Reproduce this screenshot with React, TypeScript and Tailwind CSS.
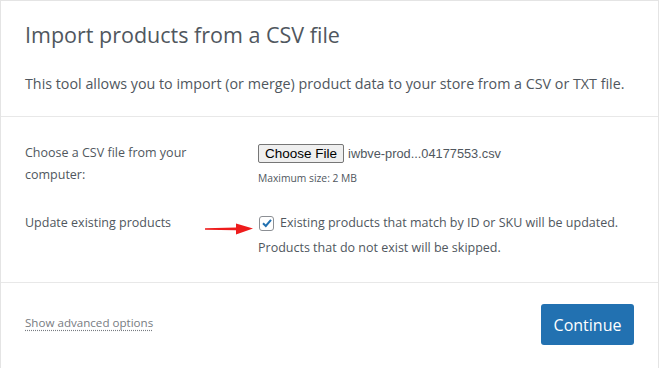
export default function App() {
  return (
    <div className="h-[368px] w-[659px] overflow-hidden bg-white font-['Open_Sans',sans-serif] text-[#50575e]">
      <div className="h-full border-x border-t border-[#e4e4e4]">
        <header className="border-b border-[#e8e8e8] px-6 pt-[18px] pb-[21px]">
          <h1 className="text-[21.5px] leading-[32px] text-[#50575e]">Import products from a CSV file</h1>
          <p className="mt-[22px] text-[14.3px] leading-[22px]">
            This tool allows you to import (or merge) product data to your store from a CSV or TXT file.
          </p>
        </header>

        <section className="border-b border-[#e8e8e8] px-6 pt-[25px] pb-[23px] text-[12.5px] leading-[22px]">
          <div className="flex">
            <div className="w-[233px] pr-[40px]">Choose a CSV file from your computer:</div>
            <div className="flex-1">
              <div className="flex items-center gap-[4px] pt-[2px] font-['Liberation_Sans',sans-serif] leading-[17px]">
                <span className="rounded-[2px] border border-[#767676] bg-[#efefef] px-[6px] text-[13.5px] text-black">
                  Choose File
                </span>
                <span className="text-[12.8px]">iwbve-prod...04177553.csv</span>
              </div>
              <div className="mt-[7px] text-[10.3px] leading-[16px]">Maximum size: 2 MB</div>
            </div>
          </div>

          <div className="mt-[26px] flex">
            <div className="w-[233px]">Update existing products</div>
            <div className="relative flex-1">
              <svg
                className="absolute left-[-53px] top-[11px]"
                width="48"
                height="12"
                viewBox="0 0 48 12"
              >
                <path d="M0 5.2 L31 4.4 L31 0.5 L48 5.5 L31 11.5 L31 7.2 L0 6.8 Z" fill="#ee1c1c" />
              </svg>
              <div className="flex items-center gap-[6px] whitespace-nowrap">
                <span className="ml-[1px] flex h-[15px] w-[15px] items-center justify-center rounded-[3px] border border-[#8c8f94] bg-white">
                  <svg width="12" height="12" viewBox="0 0 12 12">
                    <path d="M2 6.2 L4.8 9 L10 2.8" fill="none" stroke="#2271b1" strokeWidth="2" />
                  </svg>
                </span>
                <span>Existing products that match by ID or SKU will be updated.</span>
              </div>
              <div className="mt-[3px]">Products that do not exist will be skipped.</div>
            </div>
          </div>
        </section>

        <footer className="flex items-start justify-between px-6 pt-[21px]">
          <a
            className="mt-[9px] text-[11.6px] leading-[20px] text-[#787c82] underline decoration-dotted underline-offset-[3px]"
            href="#"
          >
            Show advanced options
          </a>
          <button className="h-[41px] w-[93px] rounded-[3px] bg-[#2271b1] text-[16px] text-white">Continue</button>
        </footer>
      </div>
    </div>
  );
}
